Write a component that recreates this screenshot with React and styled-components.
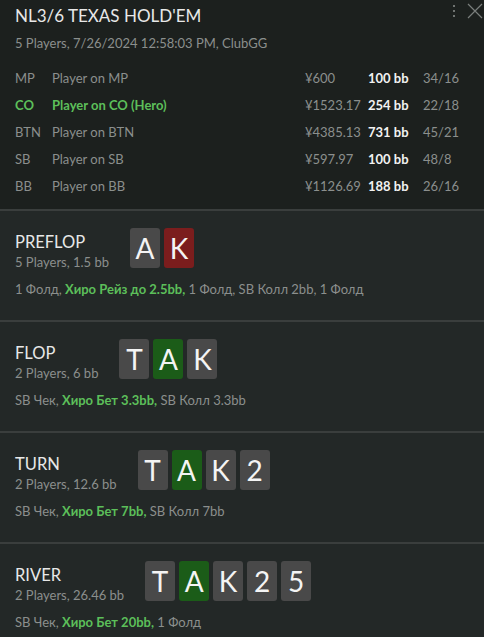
import React from "react";
import styled, { createGlobalStyle } from "styled-components";

const GlobalStyle = createGlobalStyle`
  html, body {
    margin: 0;
    padding: 0;
    background: #232827;
  }
  body {
    font-family: Lato, "Noto Sans", sans-serif;
    color: #8b8f8d;
  }
`;

const players = [
  { pos: "MP", name: "Player on MP", stack: "¥600", bb: "100 bb", stats: "34/16" },
  { pos: "CO", name: "Player on CO (Hero)", stack: "¥1523.17", bb: "254 bb", stats: "22/18", hero: true },
  { pos: "BTN", name: "Player on BTN", stack: "¥4385.13", bb: "731 bb", stats: "45/21" },
  { pos: "SB", name: "Player on SB", stack: "¥597.97", bb: "100 bb", stats: "48/8" },
  { pos: "BB", name: "Player on BB", stack: "¥1126.69", bb: "188 bb", stats: "26/16" },
];

const streets = [
  {
    name: "PREFLOP",
    info: "5 Players, 1.5 bb",
    cards: [["A", "grey"], ["K", "red"]],
    before: "1 Фолд, ",
    hero: "Хиро Рейз до 2.5bb,",
    after: " 1 Фолд, SB Колл 2bb, 1 Фолд",
  },
  {
    name: "FLOP",
    info: "2 Players, 6 bb",
    cards: [["T", "grey"], ["A", "green"], ["K", "grey"]],
    before: "SB Чек, ",
    hero: "Хиро Бет 3.3bb,",
    after: " SB Колл 3.3bb",
  },
  {
    name: "TURN",
    info: "2 Players, 12.6 bb",
    cards: [["T", "grey"], ["A", "green"], ["K", "grey"], ["2", "grey"]],
    before: "SB Чек, ",
    hero: "Хиро Бет 7bb,",
    after: " SB Колл 7bb",
  },
  {
    name: "RIVER",
    info: "2 Players, 26.46 bb",
    cards: [["T", "grey"], ["A", "green"], ["K", "grey"], ["2", "grey"], ["5", "grey"]],
    before: "SB Чек, ",
    hero: "Хиро Бет 20bb,",
    after: " 1 Фолд",
  },
];

const cardColors = {
  grey: "#494949",
  red: "#7b1d1d",
  green: "#1b5c18",
};

const App = () => {
  return (
    <>
      <GlobalStyle />
      <Header>
        <TitleRow>
          <div>
            <Title>NL3/6 TEXAS HOLD'EM</Title>
            <SubTitle>5 Players, 7/26/2024 12:58:03 PM, ClubGG</SubTitle>
          </div>
          <Tools>
            <svg width="12" height="16" viewBox="0 0 12 16">
              <rect x="5" y="3" width="2" height="2" fill="#6f7371" />
              <rect x="5" y="8" width="2" height="2" fill="#6f7371" />
              <rect x="5" y="13" width="2" height="2" fill="#6f7371" />
            </svg>
            <svg width="18" height="18" viewBox="0 0 18 18">
              <path d="M2 2 L16 16 M16 2 L2 16" stroke="#7a7e7c" strokeWidth="1.2" />
            </svg>
          </Tools>
        </TitleRow>
        <PlayerTable>
          {players.map((p) => (
            <PlayerRow key={p.pos} $hero={p.hero}>
              <span>{p.pos}</span>
              <span>{p.name}</span>
              <span>{p.stack}</span>
              <Big>{p.bb}</Big>
              <span>{p.stats}</span>
            </PlayerRow>
          ))}
        </PlayerTable>
      </Header>
      {streets.map((s) => (
        <Street key={s.name}>
          <StreetTop>
            <StreetInfo>
              <StreetName>{s.name}</StreetName>
              <StreetSub>{s.info}</StreetSub>
            </StreetInfo>
            <Cards>
              {s.cards.map(([rank, color], i) => (
                <Card key={i} $color={cardColors[color]}>
                  {rank}
                </Card>
              ))}
            </Cards>
          </StreetTop>
          <Actions>
            {s.before}
            <HeroAction>{s.hero}</HeroAction>
            {s.after}
          </Actions>
        </Street>
      ))}
    </>
  );
};

const Header = styled.div`
  background: #1c201e;
  padding: 4px 0 9px 15px;
  border-bottom: 2px solid #3a3e3d;
`;
const TitleRow = styled.div`
  display: flex;
  justify-content: space-between;
  align-items: flex-start;
`;
const Title = styled.div`
  font-size: 17px;
  color: #e8e8e8;
  line-height: 24px;
`;
const SubTitle = styled.div`
  font-size: 13px;
  line-height: 18px;
  margin-top: 6px;
  color: #8b8f8d;
`;
const Tools = styled.div`
  display: flex;
  align-items: flex-start;
  gap: 6px;
  margin-top: -2px;
  padding-right: 0;
`;
const PlayerTable = styled.div`
  margin-top: 13px;
  display: flex;
  flex-direction: column;
`;
const PlayerRow = styled.div`
  display: grid;
  grid-template-columns: 37px 253px 63px 55px auto;
  font-size: 13px;
  line-height: 27px;
  color: ${(p) => (p.$hero ? "#5cbf5a" : "#8b8f8d")};
  font-weight: ${(p) => (p.$hero ? 700 : 400)};

  & > span:nth-child(3),
  & > span:nth-child(5) {
    color: #8b8f8d;
    font-weight: 400;
  }
`;
const Big = styled.span`
  color: #f2f2f2;
  font-weight: 700;
`;
const Street = styled.div`
  padding: 17px 15px 22px;
  border-bottom: 2px solid #3a3e3d;
  background: #232827;
`;
const StreetTop = styled.div`
  display: flex;
  align-items: flex-start;
  gap: 21px;
`;
const StreetInfo = styled.div`
  display: flex;
  flex-direction: column;
  margin-top: 3px;
`;
const StreetName = styled.div`
  font-size: 16.5px;
  line-height: 22px;
  color: #e8e8e8;
`;
const StreetSub = styled.div`
  font-size: 13px;
  line-height: 19px;
  color: #8b8f8d;
`;
const Cards = styled.div`
  display: flex;
  gap: 4px;
`;
const Card = styled.div`
  width: 30px;
  height: 40px;
  border-radius: 3px;
  background: ${(p) => p.$color};
  color: #f4f4f4;
  font-size: 28px;
  display: flex;
  align-items: center;
  justify-content: center;
`;
const Actions = styled.div`
  margin-top: 8px;
  font-size: 13px;
  line-height: 18px;
  color: #8b8f8d;
`;
const HeroAction = styled.span`
  color: #5cbf5a;
  font-weight: 700;
`;

export default App;
